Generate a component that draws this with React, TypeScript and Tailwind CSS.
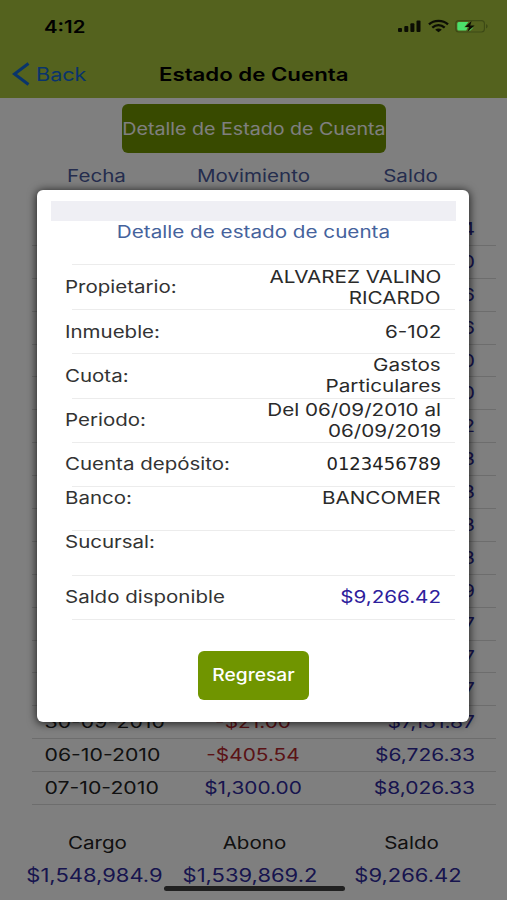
import { ReactNode } from 'react';
import clsx from 'clsx';

interface Row {
  fecha?: string;
  movimiento?: string;
  saldo: string;
}

interface Detail {
  label: string;
  value: string[];
  kind?: 'top' | 'account' | 'balance';
}

const ROWS: Row[] = [
  { saldo: '$5,120.34' },
  { saldo: '$5,099.30' },
  { saldo: '$6,399.36' },
  { saldo: '$6,378.36' },
  { saldo: '$7,678.30' },
  { saldo: '$7,657.30' },
  { saldo: '$7,251.82' },
  { saldo: '$8,551.83' },
  { saldo: '$8,530.83' },
  { saldo: '$8,125.33' },
  { saldo: '$8,104.33' },
  { saldo: '$7,698.79' },
  { saldo: '$7,194.87' },
  { saldo: '$7,173.87' },
  { saldo: '$7,152.87' },
  { fecha: '30-09-2010', movimiento: '-$21.00', saldo: '$7,131.87' },
  { fecha: '06-10-2010', movimiento: '-$405.54', saldo: '$6,726.33' },
  { fecha: '07-10-2010', movimiento: '$1,300.00', saldo: '$8,026.33' },
];

const DETAILS: Detail[] = [
  { label: 'Propietario:', value: ['ALVAREZ VALINO', 'RICARDO'] },
  { label: 'Inmueble:', value: ['6-102'] },
  { label: 'Cuota:', value: ['Gastos', 'Particulares'] },
  { label: 'Periodo:', value: ['Del 06/09/2010 al', '06/09/2019'] },
  { label: 'Cuenta depósito:', value: ['0123456789'], kind: 'account' },
  { label: 'Banco:', value: ['BANCOMER'], kind: 'top' },
  { label: 'Sucursal:', value: [], kind: 'top' },
  { label: 'Saldo disponible', value: ['$9,266.42'], kind: 'balance' },
];

const isNegative = (amount?: string) => !!amount && amount.startsWith('-');

// Wide lettering: the scale-x class sets how far a text is stretched sideways
function Wide({ children, className = 'scale-x-[1.21]' }: { children?: ReactNode; className?: string }) {
  return <span className={clsx('inline-block whitespace-nowrap', className)}>{children}</span>;
}

function StatusIcons() {
  return (
    <svg width="92" height="16" viewBox="0 0 92 16" className="relative z-10 mt-[2px]">
      <g fill="#0b0d04">
        <rect x="1" y="9" width="4" height="4" rx="1" />
        <rect x="7.3" y="7" width="4" height="6" rx="1" />
        <rect x="13.4" y="4.3" width="4" height="8.7" rx="1" />
        <rect x="19.5" y="1.5" width="4" height="11.5" rx="1" />
      </g>
      <g fill="none" stroke="#0b0d04" strokeWidth="2.3">
        <path d="M32 5.4 C37 0.6 46 0.6 51 5.4" />
        <path d="M35.3 8.7 C39 5.4 44 5.4 47.7 8.7" />
      </g>
      <path d="M38.2 10.7 C40.2 9.1 42.8 9.1 44.8 10.7 L41.5 13.2 Z" fill="#0b0d04" />
      <rect x="58.8" y="1.6" width="28.6" height="11.4" rx="3" fill="none" stroke="#3d4a16" strokeWidth="1.1" />
      <path d="M89 5.2 C91.2 5.8 91.2 8.8 89 9.4 Z" fill="#3d4a16" />
      <path d="M61.8 3 H71.5 L67.3 8.3 H70.8 L69.2 11.6 H61.8 Q60.3 11.6 60.3 10.1 V4.5 Q60.3 3 61.8 3 Z" fill="#4be06c" />
      <path d="M75.6 8.4 L76.4 8.6 L73.4 11.6 H72 Z" fill="#4be06c" />
      <path d="M74.6 2 L68 7.9 H72.2 L70.6 12.6 L77.6 6.6 H73.2 Z" fill="#0b0d04" />
    </svg>
  );
}

function Header() {
  return (
    <header className="h-[98px] bg-[#a8c43c]">
      <div className="flex h-[49px] items-start justify-between pt-[17px] pr-[18px] pl-[44px]">
        <Wide className="origin-left scale-x-[1.2] font-semibold text-black">4:12</Wide>
        <StatusIcons />
      </div>
      <div className="grid h-[49px] grid-cols-[110px_1fr_110px] items-center pt-px text-[18px]">
        <div className="flex items-center pl-3 text-[#1268d8]">
          <svg width="18" height="24" viewBox="0 0 18 24" fill="none" stroke="currentColor" strokeWidth="3">
            <path d="M16.5 1.5 L2.5 12 L16.5 22.5" />
          </svg>
          <Wide className="ml-[6px] origin-left scale-x-[1.2] pt-px">Back</Wide>
        </div>
        <h1 className="pt-[2px] text-center font-semibold text-black">
          <Wide className="scale-x-[1.235]">Estado de Cuenta</Wide>
        </h1>
      </div>
    </header>
  );
}

function DetailRow({ label, value, kind }: Detail) {
  return (
    <div
      className={clsx(
        'relative flex h-[44.25px] justify-between px-[14px] leading-[21px] text-[#333333] after:absolute after:right-0 after:bottom-0 after:left-[21px] after:h-px after:bg-[#ececec]',
        kind === 'top' ? 'items-start pt-px' : 'items-center',
      )}
    >
      <Wide className="origin-left scale-x-[1.205]">{label}</Wide>
      {kind === 'account' ? (
        <span className="pb-[3px] font-['DejaVu_Sans',sans-serif] text-[18px] text-[#222222]">{value[0]}</span>
      ) : (
        <div className={clsx('flex flex-col items-end', kind === 'balance' ? 'text-[#2d209c]' : 'text-[#2a2a2a]')}>
          {value.map((line) => (
            <Wide key={line} className="origin-right scale-x-[1.215]">
              {line}
            </Wide>
          ))}
        </div>
      )}
    </div>
  );
}

export default function App() {
  return (
    <div className="relative h-[900px] w-[507px] overflow-hidden bg-white font-['Inter',sans-serif] text-[17px] leading-5">
      <Header />
      <main className="pt-[6px]">
        <button className="mx-auto flex h-[49px] w-[264px] items-center justify-center rounded-[6px] bg-[#709500] text-white">
          <Wide className="scale-x-[1.155]">Detalle de Estado de Cuenta</Wide>
        </button>
        <div className="mx-[18px] mt-[13px] grid grid-cols-3 text-center text-[#4a5a9c]">
          <Wide>Fecha</Wide>
          <Wide>Movimiento</Wide>
          <Wide>Saldo</Wide>
        </div>
        <div className="mt-[27px] mr-[11px] ml-8">
          {ROWS.map((row) => (
            <div
              key={row.saldo}
              className="grid h-[32.9px] grid-cols-[142px_158px_1fr] items-center border-b border-[#dadada] pr-[21px]"
            >
              <Wide className="origin-left scale-x-[1.25] pl-[10px] text-[#222222]">{row.fecha}</Wide>
              <Wide
                className={clsx(
                  'scale-x-[1.225] text-center',
                  isNegative(row.movimiento) ? 'text-[#b5262c]' : 'text-[#2f2a9c]',
                )}
              >
                {row.movimiento}
              </Wide>
              <Wide className="origin-right scale-x-[1.235] text-right text-[#2f2a9c]">{row.saldo}</Wide>
            </div>
          ))}
        </div>
        <div className="mr-[17px] ml-[19px] mt-[28px] grid grid-cols-3 text-center text-[#222222]">
          <Wide>Cargo</Wide>
          <Wide>Abono</Wide>
          <Wide>Saldo</Wide>
        </div>
        <div className="mt-[13px] mr-[18px] ml-[16px] grid grid-cols-[157px_154px_1fr] text-center text-[18px] text-[#2f2a9c]">
          <Wide className="scale-x-[1.22]">$1,548,984.9</Wide>
          <Wide className="scale-x-[1.22]">$1,539,869.2</Wide>
          <Wide className="scale-x-[1.22]">$9,266.42</Wide>
        </div>
      </main>

      <div className="absolute inset-0 bg-black/50" />
      <div className="absolute bottom-[9px] left-[164px] h-[5px] w-[181px] rounded-full bg-[#202020]" />

      <section className="absolute top-[190px] left-[37px] h-[532px] w-[432px] rounded-[6px] bg-white px-[14px] pt-[11px] shadow-[0_1px_9px_1px_rgba(0,0,0,0.7)]">
        <div className="-mr-px h-5 bg-[#efeff4]" />
        <h2 className="h-[43px] pt-px text-center leading-[21px] text-[#45629c]">
          <Wide className="scale-x-[1.215]">Detalle de estado de cuenta</Wide>
        </h2>
        <div className="ml-[21px] h-px bg-[#ececec]" />
        <div className="pt-[0.8px]">
          {DETAILS.map((detail) => (
            <DetailRow key={detail.label} {...detail} />
          ))}
        </div>
        <button className="mx-auto mt-[31.2px] flex h-[49px] w-[111px] items-center justify-center rounded-[6px] bg-[#709500] font-medium text-white">
          <Wide className="scale-x-[1.13]">Regresar</Wide>
        </button>
      </section>
    </div>
  );
}
